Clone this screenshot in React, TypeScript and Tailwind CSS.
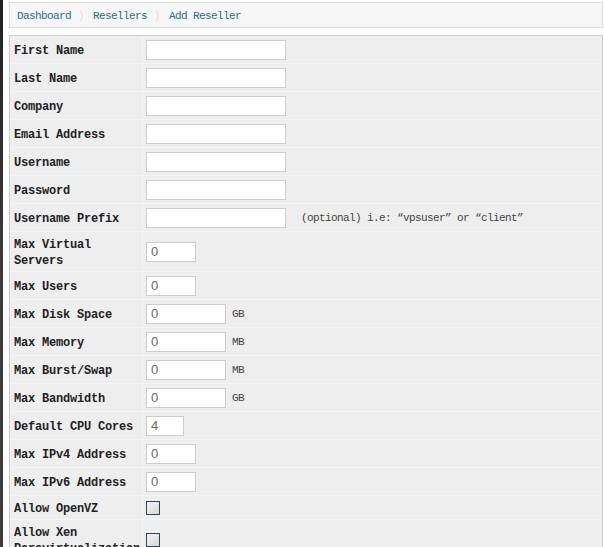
import React from 'react';

interface Field {
  label: string;
  kind: 'text' | 'num' | 'check';
  width?: string;
  value?: string;
  unit?: string;
  hint?: string;
}

const fields: Field[] = [
  { label: 'First Name', kind: 'text' },
  { label: 'Last Name', kind: 'text' },
  { label: 'Company', kind: 'text' },
  { label: 'Email Address', kind: 'text' },
  { label: 'Username', kind: 'text' },
  { label: 'Password', kind: 'text' },
  { label: 'Username Prefix', kind: 'text', hint: '(optional) i.e: \u201cvpsuser\u201d or \u201cclient\u201d' },
  { label: 'Max Virtual Servers', kind: 'num', width: 'w-[50px]', value: '0' },
  { label: 'Max Users', kind: 'num', width: 'w-[50px]', value: '0' },
  { label: 'Max Disk Space', kind: 'num', width: 'w-[80px]', value: '0', unit: 'GB' },
  { label: 'Max Memory', kind: 'num', width: 'w-[80px]', value: '0', unit: 'MB' },
  { label: 'Max Burst/Swap', kind: 'num', width: 'w-[80px]', value: '0', unit: 'MB' },
  { label: 'Max Bandwidth', kind: 'num', width: 'w-[80px]', value: '0', unit: 'GB' },
  { label: 'Default CPU Cores', kind: 'num', width: 'w-[38px]', value: '4' },
  { label: 'Max IPv4 Address', kind: 'num', width: 'w-[50px]', value: '0' },
  { label: 'Max IPv6 Address', kind: 'num', width: 'w-[50px]', value: '0' },
  { label: 'Allow OpenVZ', kind: 'check' },
  { label: 'Allow Xen Paravirtualization', kind: 'check' },
];

const mono = "font-['Liberation_Mono',monospace]";

function Chevron() {
  return (
    <svg width="6" height="14" viewBox="0 0 6 14" className="mx-[8px]">
      <path d="M1 1 Q5 7 1 13" fill="none" stroke="#dcdcdc" strokeWidth="1" />
    </svg>
  );
}

function Row({ f }: { f: Field }) {
  return (
    <div className="flex border-b border-[#f5f5f5]">
      <div
        className={`w-[133px] shrink-0 pl-[4px] pr-1 pt-[5px] pb-[2px] flex items-center text-[12px] leading-[16px] font-bold tracking-[-0.2px] text-[#222] border-r border-[#f5f5f5] ${mono}`}
      >
        {f.label}
      </div>
      <div className="flex-1 flex items-center pl-[3px] pt-1 pb-[3px] min-h-[23px]">
        {f.kind === 'check' ? (
          <span className="block w-[14px] h-[14px] border border-[#2a4866] bg-gradient-to-br from-[#f4f4f4] to-[#d8d8d0]" />
        ) : (
          <div
            className={`${f.width ?? 'w-[140px]'} h-[20px] bg-white border border-[#cccccc] pl-[4px] flex items-center text-[13px] text-[#666] font-['Liberation_Sans',sans-serif]`}
          >
            {f.value}
          </div>
        )}
        {f.unit && (
          <span className={`ml-[6px] text-[11px] tracking-[-0.6px] text-[#444] ${mono}`}>{f.unit}</span>
        )}
        {f.hint && (
          <span className={`ml-[15px] text-[11px] tracking-[-0.6px] text-[#444] ${mono}`}>{f.hint}</span>
        )}
      </div>
    </div>
  );
}

export default function App() {
  return (
    <div className="flex h-[547px] overflow-hidden bg-white">
      <div className="w-[3px] shrink-0 bg-gradient-to-b from-[#222] via-[#3c3c3c] to-[#3c3c3c]" />
      <div className="flex-1 ml-[6px] mr-[1px]">
        <div className="mt-[2px] h-[26px] border border-[#dddddd] bg-[#f6f6f6] flex items-center pl-[7px] pt-[2px]">
          <a className={`text-[11px] tracking-[-0.6px] text-[#1f6f8b] ${mono}`}>Dashboard</a>
          <Chevron />
          <a className={`text-[11px] tracking-[-0.6px] text-[#1f6f8b] ${mono}`}>Resellers</a>
          <Chevron />
          <span className={`text-[11px] tracking-[-0.6px] text-[#1f6f8b] ${mono}`}>Add Reseller</span>
        </div>
        <div className="mt-[7px] border border-[#cccccc] bg-[#eeeeee]">
          {fields.map((f) => (
            <Row key={f.label} f={f} />
          ))}
        </div>
      </div>
    </div>
  );
}
